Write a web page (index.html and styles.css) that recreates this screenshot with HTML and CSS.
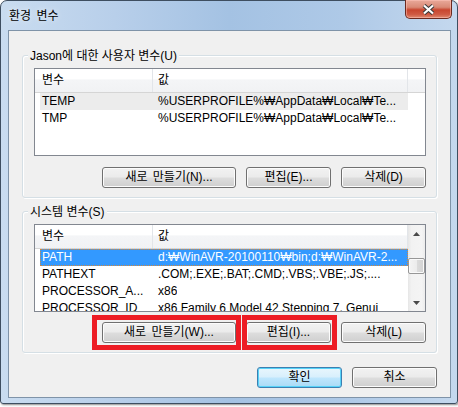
FILE: index.html
```html
<!DOCTYPE html>
<html lang="ko">
<head>
<meta charset="utf-8">
<title>환경 변수</title>
<link rel="stylesheet" href="styles.css">
</head>
<body>
<div class="window">
  <div class="titlebar">
    <span class="title">환경 변수</span>
    <div class="close">
      <svg width="13" height="11" viewBox="0 0 13 11">
        <path d="M2 1.5 L11 9.5 M11 1.5 L2 9.5" stroke="#3b3b3b" stroke-width="4.2" fill="none"/>
        <path d="M2 1.5 L11 9.5 M11 1.5 L2 9.5" stroke="#ffffff" stroke-width="2.2" fill="none"/>
      </svg>
    </div>
  </div>
  <div class="client">
    <div class="group">
      <span class="group-label">Jason에 대한 사용자 변수(U)</span>
      <div class="listview">
        <div class="lv-main">
          <div class="lv-header"><div class="h-c1">변수</div><div class="h-c2">값</div></div>
          <div class="lv-row inactive"><span class="r-c1">TEMP</span><span class="r-c2">%USERPROFILE%₩AppData₩Local₩Te...</span></div>
          <div class="lv-row"><span class="r-c1">TMP</span><span class="r-c2">%USERPROFILE%₩AppData₩Local₩Te...</span></div>
        </div>
      </div>
      <div class="btnrow">
        <div class="btn wide">새로 만들기(N)...</div>
        <div class="btn">편집(E)...</div>
        <div class="btn">삭제(D)</div>
      </div>
    </div>
    <div class="group group-sys">
      <span class="group-label">시스템 변수(S)</span>
      <div class="listview">
        <div class="lv-main">
          <div class="lv-header"><div class="h-c1">변수</div><div class="h-c2">값</div></div>
          <div class="lv-row active"><span class="r-c1">PATH</span><span class="r-c2">d:₩WinAVR-20100110₩bin;d:₩WinAVR-2...</span></div>
          <div class="lv-row"><span class="r-c1">PATHEXT</span><span class="r-c2">.COM;.EXE;.BAT;.CMD;.VBS;.VBE;.JS;....</span></div>
          <div class="lv-row"><span class="r-c1">PROCESSOR_A...</span><span class="r-c2">x86</span></div>
          <div class="lv-row"><span class="r-c1">PROCESSOR_ID</span><span class="r-c2">x86 Family 6 Model 42 Stepping 7, Genui</span></div>
        </div>
        <div class="vscroll">
          <div class="sb-btn"><svg width="7" height="4" viewBox="0 0 7 4"><path d="M0 4 L3.5 0 L7 4Z" fill="#4a4a4a"/></svg></div>
          <div class="sb-track"><div class="sb-thumb"></div></div>
          <div class="sb-btn"><svg width="7" height="4" viewBox="0 0 7 4"><path d="M0 0 L3.5 4 L7 0Z" fill="#4a4a4a"/></svg></div>
        </div>
      </div>
      <div class="btnrow">
        <div class="btn wide">새로 만들기(W)...</div>
        <div class="btn">편집(I)...</div>
        <div class="btn">삭제(L)</div>
      </div>
      <div class="mark mark-1"></div>
      <div class="mark mark-2"></div>
    </div>
    <div class="dlg-btns">
      <div class="btn default">확인</div>
      <div class="btn">취소</div>
    </div>
  </div>
</div>
</body>
</html>
```

FILE: styles.css
```css
* { box-sizing: border-box; }
html, body { margin: 0; padding: 0; }
body {
  width: 458px;
  height: 407px;
  overflow: hidden;
  background: #ffffff;
  font-family: "Liberation Sans", "Noto Sans CJK KR", sans-serif;
  font-size: 12px;
  color: #000;
}
.window {
  width: 458px;
  height: 404px;
  border: 1px solid #3e4e60;
  border-radius: 7px 7px 3px 3px;
  background: linear-gradient(90deg, #c9dcf0 0%, #b8cfea 25%, #a4c2e3 50%, #aec9e7 75%, #c4d8ee 100%);
  box-shadow: 1px 1px 2px rgba(0,0,0,0.45);
  display: flex;
  flex-direction: column;
}
.titlebar {
  height: 29px;
  flex: none;
  display: flex;
  justify-content: space-between;
  align-items: flex-start;
  padding-left: 8px;
}
.title {
  font-family: "Noto Sans CJK KR", sans-serif;
  line-height: 28px;
  font-size: 12px;
  color: #000;
  word-spacing: 2px;
  text-shadow: 0 0 6px rgba(255,255,255,0.8);
}
.close {
  width: 47px;
  height: 19px;
  margin-top: -1px;
  margin-right: 5px;
  border: 1px solid #6b2a20;
  border-top: none;
  border-radius: 0 0 5px 5px;
  background: linear-gradient(180deg, #e9a99a 0%, #d98a76 40%, #c8462f 55%, #cf5a43 80%, #e08a70 100%);
  box-shadow: inset 0 0 0 1px rgba(255,200,190,0.5);
  display: flex;
  align-items: center;
  justify-content: center;
}
.client {
  flex: 1;
  margin: 0 6px 5px 7px;
  border: 1px solid #7f93a8;
  background: #f0f0f0;
  display: flex;
  flex-direction: column;
}
.group {
  position: relative;
  margin: 24px 13px 0;
  border: 1px solid #d5dfe5;
  border-radius: 3px;
  box-shadow: inset 1px 1px 0 #fff, 1px 1px 0 #fff;
  padding: 0 10px 9px 11px;
}
.group-sys { margin-top: 13px; }
.group-label {
  display: block;
  width: fit-content;
  height: 16px;
  line-height: 16px;
  margin: -8px 0 0 -6px;
  padding: 0 2px;
  background: #f0f0f0;
  white-space: nowrap;
}
.listview {
  margin-top: 4px;
  height: 88px;
  border: 1px solid #828790;
  background: #fff;
  display: flex;
  overflow: hidden;
}
.lv-main {
  flex: 1;
  min-width: 0;
  display: flex;
  flex-direction: column;
}
.lv-header {
  height: 24px;
  flex: none;
  display: flex;
  border-bottom: 1px solid #d5d5d5;
  background: linear-gradient(180deg, #ffffff 0%, #ffffff 42%, #f4f5f7 48%, #f1f2f4 100%);
}
.h-c1, .h-c2 {
  line-height: 23px;
  border-right: 1px solid #e2e5e9;
}
.h-c1 { width: 118px; padding-left: 7px; }
.h-c2 { width: 255px; padding-left: 5px; }
.lv-row {
  height: 17px;
  flex: none;
  width: 368px;
  margin-left: 5px;
  display: flex;
  align-items: center;
  line-height: 15px;
  white-space: nowrap;
}
.lv-row.inactive { background: #ececec; }
.lv-row.active {
  background: #3399ff;
  color: #fff;
  outline: 1px dotted #d4883c;
  outline-offset: -1px;
}
.r-c1 { width: 113px; flex: none; padding-left: 2px; overflow: hidden; }
.r-c2 { padding-left: 5px; overflow: hidden; }
.vscroll {
  width: 17px;
  flex: none;
  display: flex;
  flex-direction: column;
  background: linear-gradient(90deg, #e6e6e6 0%, #f2f2f2 20%, #f4f4f4 80%, #ececec 100%);
}
.sb-btn {
  height: 17px;
  flex: none;
  display: flex;
  align-items: center;
  justify-content: center;
}
.sb-track { flex: 1; }
.sb-thumb {
  margin-top: 16px;
  height: 16px;
  border: 1px solid #979797;
  border-radius: 2px;
  background: linear-gradient(90deg, #f4f4f4 0%, #ececec 50%, #dcdcdc 51%, #d2d2d2 100%);
  box-shadow: inset 0 0 0 1px #fafafa;
}
.btnrow {
  display: flex;
  justify-content: flex-end;
  gap: 10px;
  margin-top: 11px;
}
.group-sys .btnrow { margin-top: 10px; }
.btn {
  width: 85px;
  height: 21px;
  flex: none;
  border: 1px solid #707070;
  border-radius: 3px;
  background: linear-gradient(180deg, #f2f2f2 0%, #ebebeb 48%, #dddddd 52%, #cfcfcf 100%);
  box-shadow: inset 0 0 0 1px #fcfcfc;
  text-align: center;
  line-height: 19px;
  white-space: nowrap;
  word-spacing: 2px;
}
.btn.wide { width: 134px; }
.btn.default {
  border-color: #3c7fb1;
  background: linear-gradient(180deg, #e8f6fd 0%, #d8effc 48%, #bfe6fd 52%, #a9daf5 100%);
  box-shadow: inset 0 0 0 1px #56d2f8;
}
.dlg-btns {
  display: flex;
  justify-content: flex-end;
  gap: 10px;
  margin: 14px 13px 0;
}
.mark {
  position: absolute;
  border: 5px solid #ed1c24;
}
.mark-1 { left: 69px; top: 103px; width: 149px; height: 35px; }
.mark-2 { left: 219px; top: 103px; width: 95px; height: 35px; }
```
